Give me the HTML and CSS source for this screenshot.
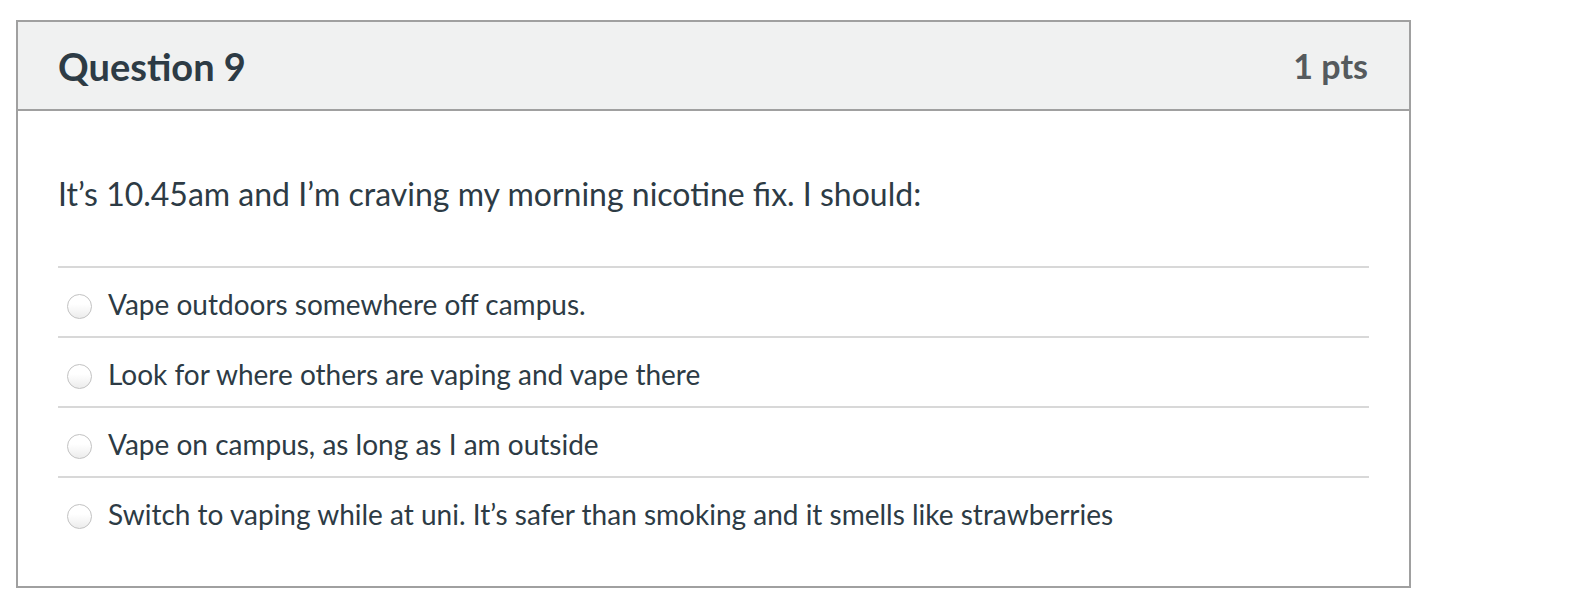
FILE: index.html
```html
<!DOCTYPE html>
<html lang="en">
<head>
<meta charset="utf-8">
<title>Question 9</title>
<link rel="stylesheet" href="styles.css">
</head>
<body>
<div class="question">
  <div class="header">
    <h2 class="title">Question 9</h2>
    <div class="points">1 pts</div>
  </div>
  <div class="content">
    <p class="question-text">It’s 10.45am and I’m craving my morning nicotine fix. I should:</p>
    <div class="answers">
      <label class="answer"><span class="radio"></span><span class="answer-text">Vape outdoors somewhere off campus.</span></label>
      <label class="answer"><span class="radio"></span><span class="answer-text">Look for where others are vaping and vape there</span></label>
      <label class="answer"><span class="radio"></span><span class="answer-text">Vape on campus, as long as I am outside</span></label>
      <label class="answer"><span class="radio"></span><span class="answer-text">Switch to vaping while at uni. It’s safer than smoking and it smells like strawberries</span></label>
    </div>
  </div>
</div>
</body>
</html>
```

FILE: styles.css
```css
html, body {
  margin: 0;
  padding: 0;
  background: #ffffff;
}

body {
  font-family: Lato, "Noto Sans", sans-serif;
  color: #2d3b45;
}

.question {
  margin: 20px 0 0 16px;
  width: 1391px;
  border: 2px solid #a0a0a0;
  box-sizing: content-box;
}

.header {
  display: flex;
  align-items: center;
  justify-content: space-between;
  height: 89px;
  padding: 0 41px 0 40px;
  background: #f0f1f1;
  border-bottom: 2px solid #a0a0a0;
  box-sizing: border-box;
}

.title {
  margin: 0;
  font-size: 38px;
  font-weight: 700;
  line-height: 1;
  color: #2d3b45;
}

.points {
  font-size: 34px;
  font-weight: 700;
  line-height: 1;
  color: #555a5d;
}

.content {
  padding: 60px 40px 40px 40px;
}

.question-text {
  margin: 0 0 50px 0;
  font-size: 32px;
  line-height: 45px;
}

.answers {
  display: flex;
  flex-direction: column;
}

.answer {
  display: flex;
  align-items: center;
  height: 70px;
  padding: 18px 0 14px 0;
  box-sizing: border-box;
  border-top: 2px solid #d8d8d8;
}

.radio {
  flex: none;
  width: 25px;
  height: 25px;
  margin: 4px 16px 0 9px;
  border-radius: 50%;
  border: 1px solid #c2c2c2;
  box-sizing: border-box;
  background: linear-gradient(#ffffff 40%, #ececec);
}

.answer-text {
  font-size: 28px;
  line-height: 36px;
}
```
